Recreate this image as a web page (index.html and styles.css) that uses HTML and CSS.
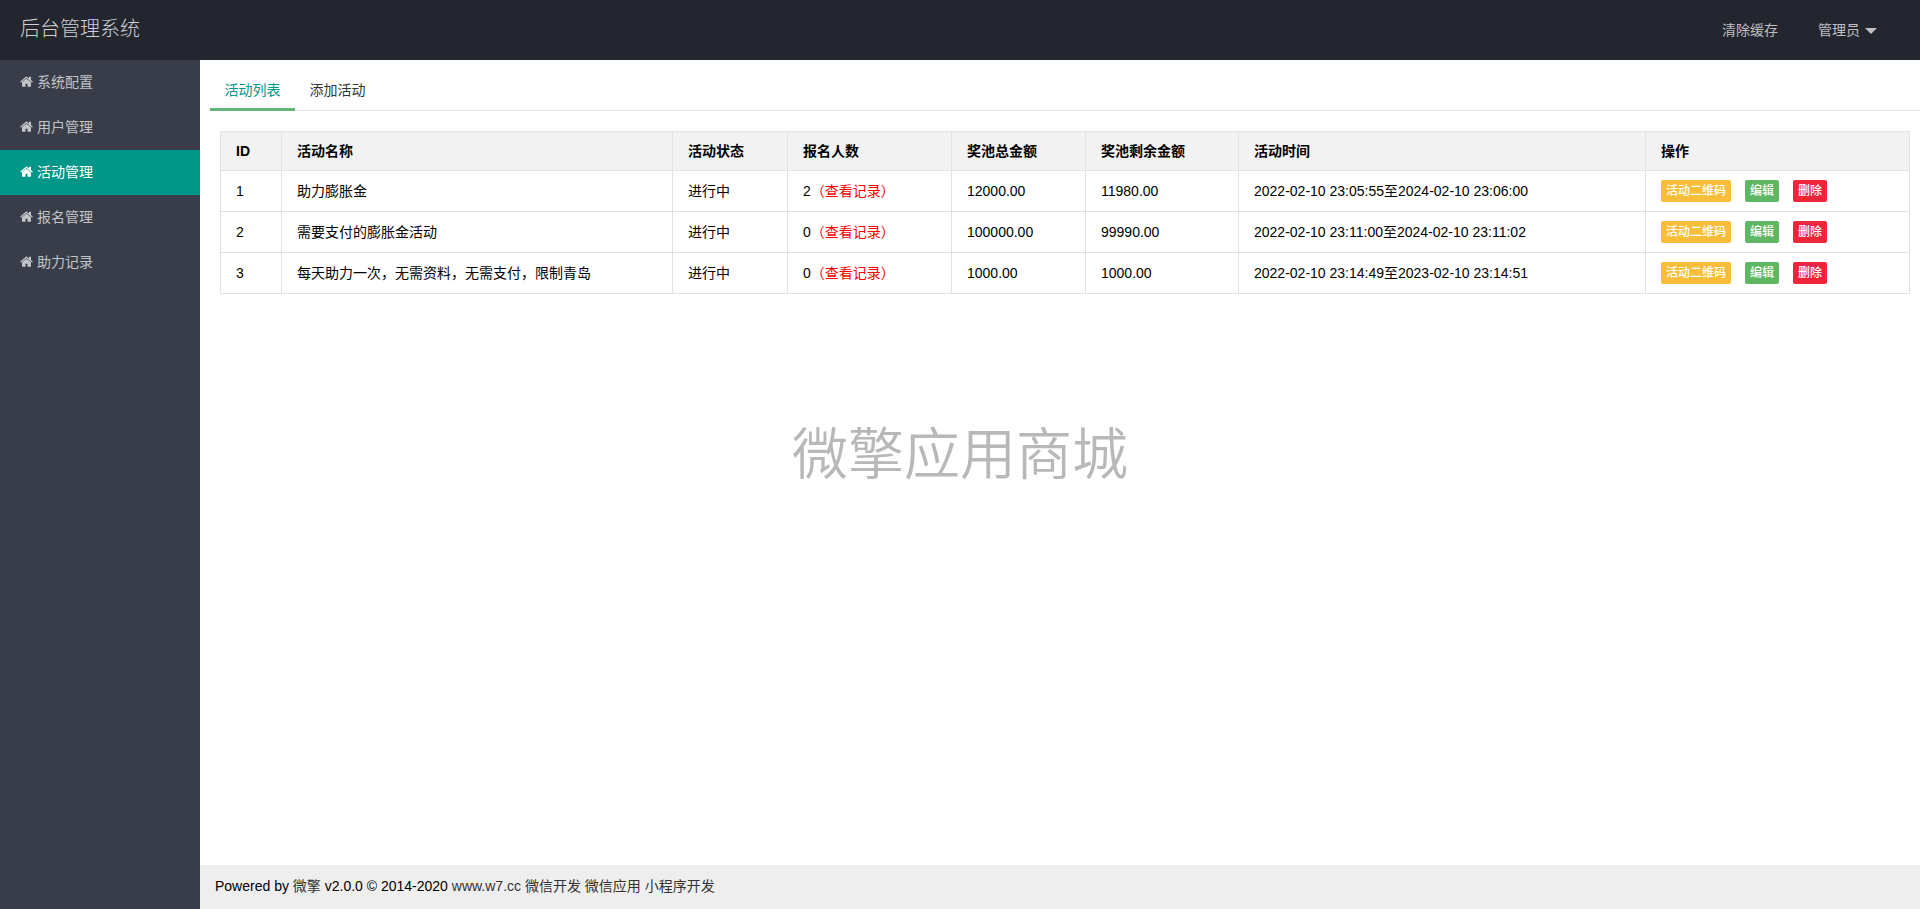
FILE: index.html
```html
<!DOCTYPE html>
<html lang="zh-CN">
<head>
<meta charset="utf-8">
<title>后台管理系统</title>
<link rel="stylesheet" href="styles.css">
</head>
<body>
<svg class="sprite" aria-hidden="true">
  <symbol id="home" viewBox="0 0 1664 1312">
    <path d="M1408 768v480q0 26-19 45t-45 19H960V928H704v384H320q-26 0-45-19t-19-45V768q0-1 .5-3t.5-3l575-474 575 474q1 2 1 6zm223-69l-62 74q-8 9-21 11h-3q-13 0-21-7L832 200 140 777q-12 8-24 7-13-2-21-11l-62-74q-8-10-7-23.500t11-21.500l719-599q32-26 76-26t76 26l244 204V64q0-14 9-23t23-9h192q14 0 23 9t9 23v408l219 182q10 8 11 21.500t-7 23.500z"/>
  </symbol>
</svg>
<div class="layout">
  <header class="header">
    <h1 class="logo">后台管理系统</h1>
    <nav class="topnav">
      <a class="topnav-link" href="#">清除缓存</a>
      <a class="topnav-link topnav-user" href="#">管理员<span class="caret"></span></a>
    </nav>
  </header>
  <nav class="side">
    <a class="side-link" href="#"><svg class="icon"><use href="#home"/></svg>系统配置</a>
    <a class="side-link" href="#"><svg class="icon"><use href="#home"/></svg>用户管理</a>
    <a class="side-link active" href="#"><svg class="icon"><use href="#home"/></svg>活动管理</a>
    <a class="side-link" href="#"><svg class="icon"><use href="#home"/></svg>报名管理</a>
    <a class="side-link" href="#"><svg class="icon"><use href="#home"/></svg>助力记录</a>
  </nav>
  <main class="main">
    <nav class="tabs">
      <a class="tab active" href="#">活动列表</a>
      <a class="tab" href="#">添加活动</a>
    </nav>
    <div class="content">
      <table class="table">
        <colgroup>
          <col class="c-id"><col class="c-name"><col class="c-state"><col class="c-count"><col class="c-total"><col class="c-left"><col class="c-time"><col class="c-ops">
        </colgroup>
        <thead>
          <tr><th>ID</th><th>活动名称</th><th>活动状态</th><th>报名人数</th><th>奖池总金额</th><th>奖池剩余金额</th><th>活动时间</th><th>操作</th></tr>
        </thead>
        <tbody>
          <tr>
            <td>1</td><td>助力膨胀金</td><td>进行中</td><td>2<a class="record" href="#">（查看记录）</a></td><td>12000.00</td><td>11980.00</td><td>2022-02-10 23:05:55至2024-02-10 23:06:00</td>
            <td><div class="ops"><button class="btn warm" type="button">活动二维码</button><button class="btn edit" type="button">编辑</button><button class="btn danger" type="button">删除</button></div></td>
          </tr>
          <tr>
            <td>2</td><td>需要支付的膨胀金活动</td><td>进行中</td><td>0<a class="record" href="#">（查看记录）</a></td><td>100000.00</td><td>99990.00</td><td>2022-02-10 23:11:00至2024-02-10 23:11:02</td>
            <td><div class="ops"><button class="btn warm" type="button">活动二维码</button><button class="btn edit" type="button">编辑</button><button class="btn danger" type="button">删除</button></div></td>
          </tr>
          <tr>
            <td>3</td><td>每天助力一次，无需资料，无需支付，限制青岛</td><td>进行中</td><td>0<a class="record" href="#">（查看记录）</a></td><td>1000.00</td><td>1000.00</td><td>2022-02-10 23:14:49至2023-02-10 23:14:51</td>
            <td><div class="ops"><button class="btn warm" type="button">活动二维码</button><button class="btn edit" type="button">编辑</button><button class="btn danger" type="button">删除</button></div></td>
          </tr>
        </tbody>
      </table>
    </div>
  </main>
  <footer class="footer">Powered by <a href="#">微擎</a> v2.0.0 © 2014-2020 <a href="#">www.w7.cc</a> <a href="#">微信开发</a> <a href="#">微信应用</a> <a href="#">小程序开发</a></footer>
  <div class="watermark">微擎应用商城</div>
</div>
</body>
</html>
```

FILE: styles.css
```css
* { box-sizing: border-box; }

body {
  margin: 0;
  font: 14px/24px "Liberation Sans", "Noto Sans CJK SC", sans-serif;
  color: #000;
  background: #fff;
}

a { color: inherit; text-decoration: none; }

.sprite { display: none; }

.layout {
  position: relative;
  display: grid;
  grid-template: 60px 1fr 44px / 200px minmax(0, 1fr);
  min-height: 100vh;
}

.header {
  grid-column: 1 / -1;
  display: flex;
  justify-content: space-between;
  align-items: center;
  padding: 0 20px;
  background: #23262e;
  color: #c0c0c2;
}

.logo {
  margin: 0;
  padding-bottom: 2px;
  font-size: 20px;
  font-weight: 300;
  color: #d0d0d2;
}

.topnav { display: flex; }

.topnav-link { padding: 0 20px; }

.topnav-user {
  display: flex;
  align-items: center;
  gap: 5px;
  padding-right: 23px;
}

.caret {
  margin-top: 2px;
  border: 6px solid transparent;
  border-top-color: currentColor;
  border-bottom: 0;
}

.side {
  grid-row: 2 / -1;
  background: #393d49;
  color: #c3c4c7;
}

.side-link {
  display: flex;
  align-items: center;
  gap: 4px;
  height: 45px;
  padding: 0 20px 2px;
}

.side-link.active { background: #009688; color: #fff; }

.icon { width: 13px; height: 11px; fill: currentColor; }

.main { padding: 10px 0 0 10px; }

.tabs {
  display: flex;
  height: 41px;
  border-bottom: 1px solid #e2e2e2;
  color: #333;
}

.tab {
  width: 85px;
  height: 41px;
  line-height: 40px;
  text-align: center;
}

.tab.active { color: #009688; border-bottom: 3px solid #5fb878; }

.content { padding: 20px 10px; }

.table {
  width: 100%;
  table-layout: fixed;
  border-collapse: collapse;
}

.table th,
.table td {
  height: 41px;
  padding: 0 15px 1px;
  border: 1px solid #e2e2e2;
  text-align: left;
}

.table th { height: 39px; background: #f2f2f2; }

.c-id { width: 61px; }
.c-name { width: 391px; }
.c-state { width: 115px; }
.c-count { width: 164px; }
.c-total { width: 134px; }
.c-left { width: 153px; }
.c-time { width: 407px; }

.record { color: #f00; }

.ops { display: flex; gap: 14px; }

.btn {
  height: 22px;
  padding: 0 5px;
  border: 0;
  border-radius: 2px;
  font: 500 12px/22px "Liberation Sans", "Noto Sans CJK SC", sans-serif;
  color: #fff;
}

.warm { background: #f8be3a; }
.edit { background: #5fb763; }
.danger { background: #ec253a; }

.footer {
  padding: 0 15px;
  line-height: 42px;
  background: #eee;
}

.footer a { color: #333; }

.watermark {
  position: absolute;
  top: 50%;
  left: 50%;
  transform: translate(-50%, -50%);
  font-size: 56px;
  line-height: 60px;
  font-weight: 350;
  color: #b8b8b8;
  white-space: nowrap;
  pointer-events: none;
}
```
